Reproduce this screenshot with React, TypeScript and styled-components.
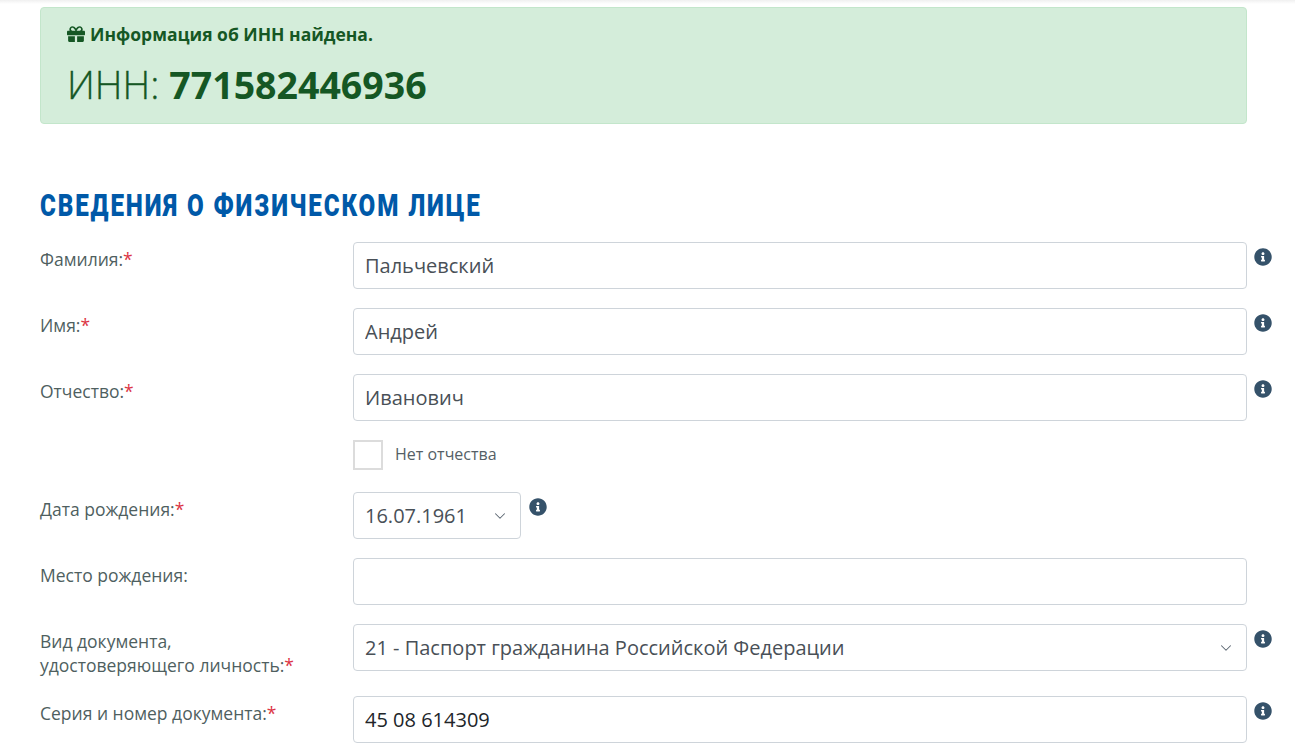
import React from "react";
import styled, { createGlobalStyle } from "styled-components";
import { FaGift, FaInfoCircle } from "react-icons/fa";
import { ChevronDown } from "lucide-react";

const GlobalStyle = createGlobalStyle`
  html, body {
    margin: 0;
    padding: 0;
    background: #fff;
    overflow: hidden;
    height: 751px;
  }
  body {
    font-family: "Open Sans", "Noto Sans", sans-serif;
  }
`;

const App = (): JSX.Element => {
  return (
    <Page>
      <GlobalStyle />
      <TopShadow />
      <Alert>
        <AlertTitle>
          <GiftIcon />
          Информация об ИНН найдена.
        </AlertTitle>
        <AlertValue>
          ИНН: <strong>771582446936</strong>
        </AlertValue>
      </Alert>

      <Heading>
        <HeadingText>Сведения о физическом лице</HeadingText>
      </Heading>

      <Row>
        <Label>
          Фамилия:<Req>*</Req>
        </Label>
        <TextInput defaultValue="Пальчевский" />
        <Info />
      </Row>
      <Row>
        <Label>
          Имя:<Req>*</Req>
        </Label>
        <TextInput defaultValue="Андрей" />
        <Info />
      </Row>
      <Row>
        <Label>
          Отчество:<Req>*</Req>
        </Label>
        <TextInput defaultValue="Иванович" />
        <Info />
      </Row>
      <CheckRow>
        <CheckBox type="checkbox" />
        <CheckLabel>Нет отчества</CheckLabel>
      </CheckRow>
      <Row>
        <Label>
          Дата рождения:<Req>*</Req>
        </Label>
        <DateCell>
          <SelectBox $width={168}>
            <SelectValue>16.07.1961</SelectValue>
            <Chevron size={18} strokeWidth={1.4} />
          </SelectBox>
          <Info />
        </DateCell>
      </Row>
      <Row>
        <Label>Место рождения:</Label>
        <TextInput defaultValue="" />
      </Row>
      <Row>
        <Label>
          Вид документа,
          <br />
          удостоверяющего личность:<Req>*</Req>
        </Label>
        <SelectBox>
          <SelectValue>21 - Паспорт гражданина Российской Федерации</SelectValue>
          <Chevron size={18} strokeWidth={1.4} />
        </SelectBox>
        <Info />
      </Row>
      <Row>
        <Label>
          Серия и номер документа:<Req>*</Req>
        </Label>
        <TextInput $black defaultValue="45 08 614309" />
        <Info />
      </Row>
    </Page>
  );
};

const Page = styled.div`
  width: 1295px;
  height: 751px;
  box-sizing: border-box;
  padding: 7px 48px 0 40px;
  overflow: hidden;
  color: #4a5a62;
`;

const TopShadow = styled.div`
  position: absolute;
  top: 0;
  left: 0;
  right: 0;
  height: 4px;
  background: linear-gradient(#f0f0f0, #fff);
`;

const Alert = styled.div`
  position: relative;
  height: 117px;
  box-sizing: border-box;
  padding: 15px 26px;
  background: #d4edda;
  border: 1px solid #c3e6cb;
  border-radius: 4px;
  color: #155724;
`;

const AlertTitle = styled.div`
  display: flex;
  align-items: center;
  gap: 5px;
  font-size: 17.5px;
  font-weight: 700;
  line-height: 22px;
`;

const GiftIcon = styled(FaGift)`
  width: 18px;
  height: 18px;
`;

const AlertValue = styled.div`
  margin-top: 14px;
  font-size: 38.5px;
  line-height: 50px;
  font-weight: 300;
  -webkit-text-stroke: 0.3px #155724;
  strong {
    font-size: 37.5px;
    font-weight: 700;
    -webkit-text-stroke: 0;
  }
`;

const Heading = styled.h2`
  margin: 64px 0 18px;
  font-family: "Roboto", sans-serif;
  font-size: 31px;
  line-height: 36px;
  font-weight: 900;
  text-transform: uppercase;
  color: #0059a8;
`;

// no condensed face is installed, so the wide one is squeezed to the reference's width
const HeadingText = styled.span`
  display: inline-block;
  white-space: nowrap;
  letter-spacing: 2.4px;
  transform: scaleX(0.78);
  transform-origin: left center;
`;

const Row = styled.div`
  display: grid;
  grid-template-columns: 313px 894px 48px;
  align-items: start;
  margin-bottom: 19px;
`;

const Label = styled.label`
  padding-top: 5px;
  font-size: 17.5px;
  line-height: 24px;
  color: #4f5f5f;
`;

const Req = styled.span`
  color: #dc3545;
`;

const TextInput = styled.input<{ $black?: boolean }>`
  width: 100%;
  height: 47px;
  box-sizing: border-box;
  padding: 0 11px 1px;
  font-family: inherit;
  font-size: 20px;
  color: ${(p) => (p.$black ? "#212529" : "#495057")};
  background: #fff;
  border: 1px solid #ced4da;
  border-radius: 4px;
  outline: none;
`;

const SelectBox = styled.div<{ $width?: number }>`
  position: relative;
  display: flex;
  align-items: center;
  width: ${(p) => (p.$width ? `${p.$width}px` : "100%")};
  height: 47px;
  box-sizing: border-box;
  padding: 0 11px 1px;
  background: #fff;
  border: 1px solid #ced4da;
  border-radius: 4px;
`;

const SelectValue = styled.span`
  font-size: 20px;
  color: #495057;
`;

const Chevron = styled(ChevronDown)`
  position: absolute;
  right: 11px;
  top: 14px;
  color: #5a6570;
`;

const Info = styled(FaInfoCircle)`
  margin: 6px 0 0 7px;
  width: 18px;
  height: 18px;
  color: #35526a;
`;

const DateCell = styled.div`
  display: flex;
  align-items: flex-start;
  gap: 1px;
`;

const CheckRow = styled.div`
  display: flex;
  align-items: center;
  gap: 12px;
  height: 30px;
  margin: 0 0 22px 313px;
`;

const CheckBox = styled.input`
  appearance: none;
  width: 30px;
  height: 30px;
  margin: 0;
  box-sizing: border-box;
  background: #fff;
  border: 2px solid #dcdcdc;
`;

const CheckLabel = styled.span`
  margin-top: -2px;
  font-size: 16px;
  color: #555f66;
`;

export default App;
